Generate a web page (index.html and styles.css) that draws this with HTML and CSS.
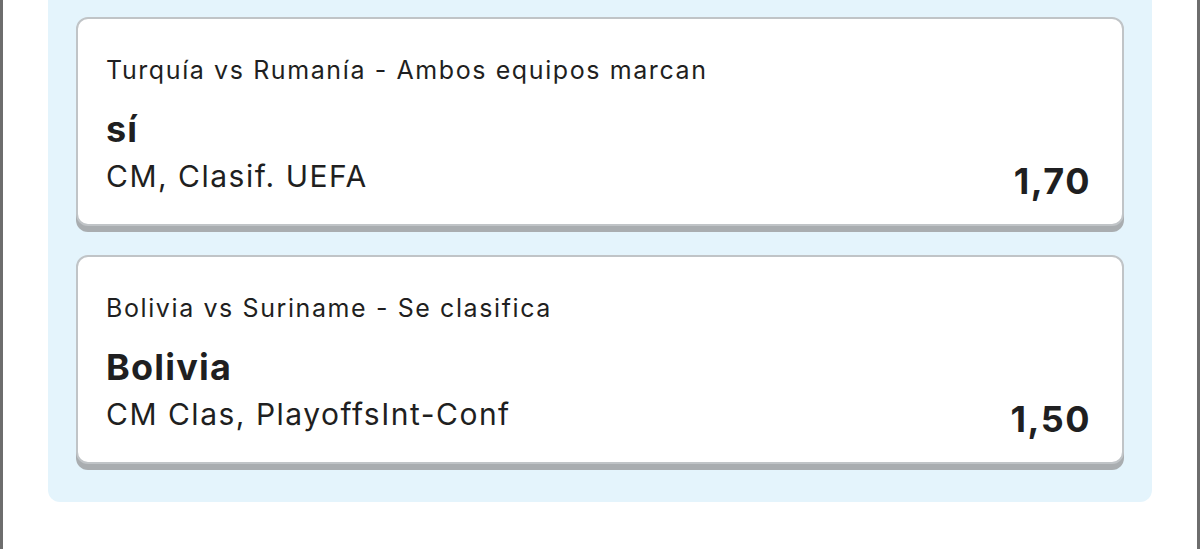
FILE: index.html
```html
<!DOCTYPE html>
<html lang="es">
<head>
<meta charset="utf-8">
<link rel="stylesheet" href="styles.css">
</head>
<body>
<div class="frame">
  <div class="panel">
    <div class="card">
      <div class="event">Turquía vs Rumanía - Ambos equipos marcan</div>
      <div class="row">
        <div class="info">
          <div class="selection">sí</div>
          <div class="market">CM, Clasif. UEFA</div>
        </div>
        <div class="odds">1,70</div>
      </div>
    </div>
    <div class="card">
      <div class="event">Bolivia vs Suriname - Se clasifica</div>
      <div class="row">
        <div class="info">
          <div class="selection">Bolivia</div>
          <div class="market">CM Clas, PlayoffsInt-Conf</div>
        </div>
        <div class="odds">1,50</div>
      </div>
    </div>
  </div>
</div>
</body>
</html>
```
FILE: styles.css
```css
* { box-sizing: border-box; }
html, body { margin: 0; padding: 0; background: #ffffff; }
body {
  font-family: Inter, "Noto Sans", "Liberation Sans", sans-serif;
  color: #1f1f21;
}
.frame {
  width: 1200px;
  height: 549px;
  border-left: 3px solid #6d6d6d;
  border-right: 3px solid #6d6d6d;
  padding: 0 45px;
}
.panel {
  background: #e4f4fc;
  border-radius: 0 0 12px 12px;
  padding: 17px 28px 38px;
  display: flex;
  flex-direction: column;
  gap: 29px;
}
.card {
  background: #ffffff;
  border: 2px solid #c0c4c7;
  border-radius: 12px;
  box-shadow: 0 6px 0 #a9adb0;
  padding: 36px 31px 0 28px;
  height: 209px;
}
.event {
  font-size: 25px;
  line-height: 30px;
  letter-spacing: 1.6px;
}
.row {
  display: flex;
  justify-content: space-between;
  align-items: flex-end;
  margin-top: 24px;
}
.selection {
  font-size: 36px;
  line-height: 40px;
  font-weight: 700;
  letter-spacing: 1.2px;
}
.market {
  font-size: 30px;
  line-height: 34px;
  margin-top: 10px;
  letter-spacing: 1.5px;
}
.odds {
  font-size: 36px;
  line-height: 24px;
  font-weight: 700;
  letter-spacing: 1.5px;
}
```
